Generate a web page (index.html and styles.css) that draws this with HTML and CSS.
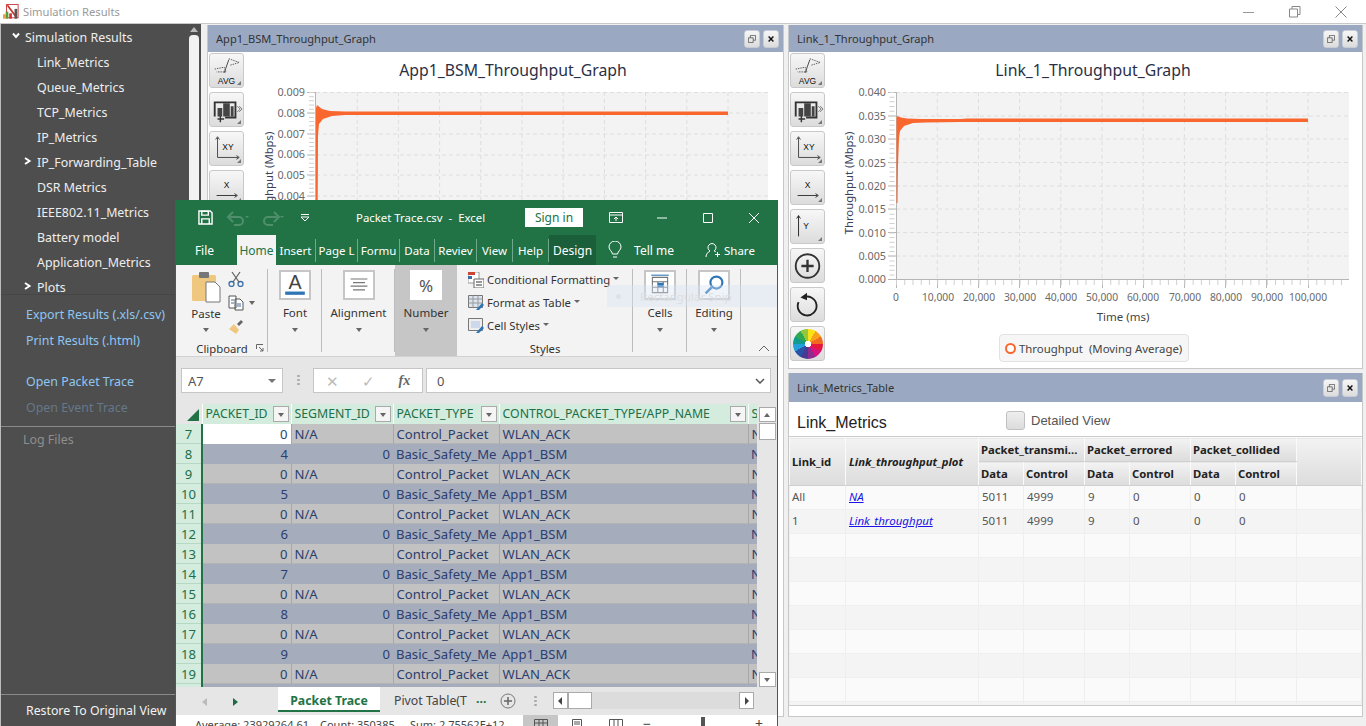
FILE: index.html
```html
<!DOCTYPE html>
<html lang="en">
<head>
<meta charset="utf-8">
<title>Simulation Results</title>
<link rel="stylesheet" href="styles.css">
</head>
<body>
<div class="app">
  <header class="titlebar">
    <svg class="app-icon" viewBox="0 0 18 17"><rect x="4" y="0" width="13" height="15" fill="#fff" stroke="#c33"/><path d="M5 1l9 12" stroke="#c33" stroke-width="2"/><rect x="0" y="11" width="3" height="5" fill="#e8a33a"/><rect x="3" y="8" width="3" height="8" fill="#5a9c3c"/><rect x="7" y="10" width="3" height="6" fill="#c33"/><rect x="13" y="5" width="3" height="11" fill="#555"/></svg>
    <span class="app-title">Simulation Results</span>
    <div class="winctl">
      <svg viewBox="0 0 12 12"><path d="M0 6.500h11" stroke="#999"/></svg>
      <svg viewBox="0 0 12 12"><path d="M.5 3h8v8h-8zM3 3V.500h8v8H8.500" fill="none" stroke="#888"/></svg>
      <svg viewBox="0 0 12 12"><path d="M.5.500l11 11M11.500.500l-11 11" stroke="#888"/></svg>
    </div>
  </header>
  <div class="main">
    <aside class="sidebar">
      <div class="side-top">
        <ul class="tree">
          <li class="root"><svg class="chev" viewBox="0 0 8 8"><path d="M1 1.500l3 3.500 3-3.500" fill="none" stroke="#fff" stroke-width="2"/></svg>Simulation Results</li>
          <li>Link_Metrics</li>
          <li>Queue_Metrics</li>
          <li>TCP_Metrics</li>
          <li>IP_Metrics</li>
          <li><svg class="chev-r" viewBox="0 0 8 8"><path d="M1 1l4.500 3L1 7" fill="none" stroke="#fff" stroke-width="2"/></svg>IP_Forwarding_Table</li>
          <li>DSR Metrics</li>
          <li>IEEE802.11_Metrics</li>
          <li>Battery model</li>
          <li>Application_Metrics</li>
          <li><svg class="chev-r" viewBox="0 0 8 8"><path d="M1 1l4.500 3L1 7" fill="none" stroke="#fff" stroke-width="2"/></svg>Plots</li>
        </ul>
        <div class="side-scroll"><span class="side-up"></span><span class="side-thumb"></span></div>
      </div>
      <div class="links">
        <a>Export Results (.xls/.csv)</a>
        <a>Print Results (.html)</a>
        <a class="gap">Open Packet Trace</a>
        <a class="off">Open Event Trace</a>
      </div>
      <div class="logs">Log Files</div>
      <div class="restore">Restore To Original View</div>
    </aside>
    <div class="desktop">

      <section class="win win-app">
        <div class="win-head"><span>App1_BSM_Throughput_Graph</span><div class="win-btns"><button class="wbtn"><svg viewBox="0 0 10 10"><path d="M.5 3.500h6v6h-6zM3 3.500V.500h6.500v6H7" fill="none" stroke="#555"/></svg></button><button class="wbtn"><svg viewBox="0 0 10 10"><path d="M2 2l6 6M8 2L2 8" stroke="#111" stroke-width="1.800"/></svg></button></div></div>
        <div class="win-body">
          <div class="tools">
            <div class="tool tri"><svg viewBox="0 0 35 35"><path d="M5 16l10-2 2 5-10 0M20 5l11 4-10 3" fill="none" stroke="#555" stroke-dasharray="1.500 1"/><path d="M15 20l5-14" stroke="#444"/><text x="17.500" y="32" class="ic-t">AVG</text></svg></div>
            <div class="tool tri"><svg viewBox="0 0 35 35"><path d="M5 25V10h22v16H16" fill="none" stroke="#333" stroke-width="2"/><path d="M8 16h5v9H8zM14 11h7v14h-7zM22 14h3v11h-3z" fill="#444"/><path d="M11 24v7M8 27.500h7" stroke="#333" stroke-width="1.500"/><path d="M29 14l3 3-3 3M31 14l3 3-3 3" fill="none" stroke="#777"/></svg></div>
            <div class="tool tri"><svg viewBox="0 0 35 35"><path d="M8 27V6M8 27h22M6 8l2-3 2 3M28 25l3 2-3 2" fill="none" stroke="#444"/><text x="19" y="19" class="ic-t">XY</text></svg></div>
            <div class="tool tri"><svg viewBox="0 0 35 35"><path d="M7 26h21M26 24l3 2-3 2" fill="none" stroke="#333"/><text x="17.500" y="18" class="ic-t">X</text></svg></div>
          </div>
          <svg class="chart" viewBox="246 52 536 320">
            <rect x="316" y="92" width="452" height="187" fill="#f3f3f3"/>
            <path class="grid" d="M357.200 92V279M398.400 92V279M439.600 92V279M480.800 92V279M522 92V279M563.200 92V279M604.400 92V279M645.600 92V279M686.800 92V279M728 92V279M316 92.500H768M316 113H768M316 134H768M316 155H768M316 175H768M316 196H768M316 217H768M316 238H768M316 258H768"/>
            <path class="axis" d="M315.500 92V280M307 92.500h8M307 113h8M307 134h8M307 155h8M307 175h8M307 196h8"/>
            <line class="minor" x1="311.500" y1="92" x2="311.500" y2="279" stroke-dasharray="1 3.160"/>
            <text class="tick" x="305" y="96">0.009</text><text class="tick" x="305" y="117">0.008</text><text class="tick" x="305" y="138">0.007</text><text class="tick" x="305" y="158">0.006</text><text class="tick" x="305" y="179">0.005</text><text class="tick" x="305" y="200">0.004</text><text class="tick" x="305" y="221">0.003</text>
            <text class="ylabel" transform="translate(273 183) rotate(-90)">Throughput (Mbps)</text>
            <text class="ctitle" x="513" y="76">App1_BSM_Throughput_Graph</text>
            <path class="trace" d="M316 260V108L317 105L322 109L330 111L345 111.500L360 111.500L728 111.500V115H360L345 115L332 116L323 119L319 124L318 135L317.500 260Z"/>
          </svg>
        </div>
      </section>

      <section class="win win-link">
        <div class="win-head"><span>Link_1_Throughput_Graph</span><div class="win-btns"><button class="wbtn"><svg viewBox="0 0 10 10"><path d="M.5 3.500h6v6h-6zM3 3.500V.500h6.500v6H7" fill="none" stroke="#555"/></svg></button><button class="wbtn"><svg viewBox="0 0 10 10"><path d="M2 2l6 6M8 2L2 8" stroke="#111" stroke-width="1.800"/></svg></button></div></div>
        <div class="win-body">
          <div class="tools">
            <div class="tool tri"><svg viewBox="0 0 35 35"><path d="M5 16l10-2 2 5-10 0M20 5l11 4-10 3" fill="none" stroke="#555" stroke-dasharray="1.500 1"/><path d="M15 20l5-14" stroke="#444"/><text x="17.500" y="32" class="ic-t">AVG</text></svg></div>
            <div class="tool tri"><svg viewBox="0 0 35 35"><path d="M5 25V10h22v16H16" fill="none" stroke="#333" stroke-width="2"/><path d="M8 16h5v9H8zM14 11h7v14h-7zM22 14h3v11h-3z" fill="#444"/><path d="M11 24v7M8 27.500h7" stroke="#333" stroke-width="1.500"/><path d="M29 14l3 3-3 3M31 14l3 3-3 3" fill="none" stroke="#777"/></svg></div>
            <div class="tool tri"><svg viewBox="0 0 35 35"><path d="M8 27V6M8 27h22M6 8l2-3 2 3M28 25l3 2-3 2" fill="none" stroke="#444"/><text x="19" y="19" class="ic-t">XY</text></svg></div>
            <div class="tool tri"><svg viewBox="0 0 35 35"><path d="M7 26h21M26 24l3 2-3 2" fill="none" stroke="#333"/><text x="17.500" y="18" class="ic-t">X</text></svg></div>
            <div class="tool tri"><svg viewBox="0 0 35 35"><path d="M8 28V6M6 9l2-3 2 3" fill="none" stroke="#222"/><text x="16" y="20" class="ic-t">Y</text></svg></div>
            <div class="tool"><svg viewBox="0 0 35 35"><circle cx="17.500" cy="18" r="12.500" fill="none" stroke="#333" stroke-width="2"/><path d="M11 18h13M17.500 11.500v13" stroke="#333" stroke-width="2.500"/></svg></div>
            <div class="tool"><svg viewBox="0 0 35 35"><path d="M13 10a10 10 0 1 1-5 5" fill="none" stroke="#222" stroke-width="2"/><path d="M10 10l7-5v8z" fill="#222"/></svg></div>
            <div class="tool"><span class="wheel"></span></div>
          </div>
          <svg class="chart" viewBox="826 52 535 316">
            <rect x="895" y="92" width="453" height="187" fill="#f3f3f3"/>
            <path class="grid" d="M936.200 92V279M977.400 92V279M1018.600 92V279M1059.800 92V279M1101 92V279M1142.200 92V279M1183.400 92V279M1224.600 92V279M1265.800 92V279M1307 92V279M895 92.500H1348M895 116H1348M895 139H1348M895 162.500H1348M895 186H1348M895 209H1348M895 232.500H1348M895 256H1348"/>
            <path class="axis" d="M895.500 92V288M887 92.500h8M887 116h8M887 139h8M887 162.500h8M887 186h8M887 209h8M887 232.500h8M887 256h8M887 279.500h461M936.500 279v9M977.500 279v9M1018.500 279v9M1059.500 279v9M1101.500 279v9M1142.500 279v9M1183.500 279v9M1224.500 279v9M1265.500 279v9M1307.500 279v9"/>
            <line class="minor" x1="891" y1="92" x2="891" y2="279" stroke-dasharray="1 3.680"/>
            <line class="minor" x1="895" y1="282.500" x2="1344" y2="282.500" stroke-dasharray="1 7.240"/>
            <text class="tick" x="885" y="96">0.040</text><text class="tick" x="885" y="120">0.035</text><text class="tick" x="885" y="143">0.030</text><text class="tick" x="885" y="167">0.025</text><text class="tick" x="885" y="190">0.020</text><text class="tick" x="885" y="213">0.015</text><text class="tick" x="885" y="237">0.010</text><text class="tick" x="885" y="260">0.005</text><text class="tick" x="885" y="283">0.000</text>
            <g class="xt"><text x="895" y="301">0</text><text x="937" y="301">10,000</text><text x="978" y="301">20,000</text><text x="1019" y="301">30,000</text><text x="1060" y="301">40,000</text><text x="1101" y="301">50,000</text><text x="1142" y="301">60,000</text><text x="1184" y="301">70,000</text><text x="1225" y="301">80,000</text><text x="1266" y="301">90,000</text><text x="1307" y="301">100,000</text></g>
            <text class="ylabel" transform="translate(852 183) rotate(-90)">Throughput (Mbps)</text>
            <text class="xlabel" x="1122" y="321">Time (ms)</text>
            <text class="ctitle" x="1092" y="76">Link_1_Throughput_Graph</text>
            <path class="trace" d="M895.500 203V118L896 116L900 117.500L906 118.500L920 119L960 119L966 118.500L1307 118.500V122H990L960 122L925 122.500L912 123L903 126L899 131L898 138L897 165L896.500 203Z"/>
          </svg>
          <div class="legend"><i></i>Throughput&nbsp; (Moving Average)</div>
        </div>
      </section>

      <section class="win win-table">
        <div class="win-head"><span>Link_Metrics_Table</span><div class="win-btns"><button class="wbtn"><svg viewBox="0 0 10 10"><path d="M.5 3.500h6v6h-6zM3 3.500V.500h6.500v6H7" fill="none" stroke="#555"/></svg></button><button class="wbtn"><svg viewBox="0 0 10 10"><path d="M2 2l6 6M8 2L2 8" stroke="#111" stroke-width="1.800"/></svg></button></div></div>
        <div class="metrics-top"><span class="metrics-title">Link_Metrics</span><span class="check"></span><span class="check-label">Detailed View</span></div>
        <div class="metrics-wrap">
          <table class="metrics">
            <colgroup><col class="m1"><col class="m2"><col class="m3"><col class="m4"><col class="m3"><col class="m4"><col class="m3"><col class="m4"><col></colgroup>
            <thead>
              <tr><th rowspan="2">Link_id</th><th rowspan="2" class="ital">Link_throughput_plot</th><th colspan="2">Packet_transmi...</th><th colspan="2">Packet_errored</th><th colspan="2">Packet_collided</th><th rowspan="2"></th></tr>
              <tr><th>Data</th><th>Control</th><th>Data</th><th>Control</th><th>Data</th><th>Control</th></tr>
            </thead>
            <tbody>
              <tr><td>All</td><td><a>NA</a></td><td>5011</td><td>4999</td><td>9</td><td>0</td><td>0</td><td>0</td><td></td></tr>
              <tr><td>1</td><td><a>Link_throughput</a></td><td>5011</td><td>4999</td><td>9</td><td>0</td><td>0</td><td>0</td><td></td></tr>
              <tr><td></td><td></td><td></td><td></td><td></td><td></td><td></td><td></td><td></td></tr>
              <tr><td></td><td></td><td></td><td></td><td></td><td></td><td></td><td></td><td></td></tr>
              <tr><td></td><td></td><td></td><td></td><td></td><td></td><td></td><td></td><td></td></tr>
              <tr><td></td><td></td><td></td><td></td><td></td><td></td><td></td><td></td><td></td></tr>
              <tr><td></td><td></td><td></td><td></td><td></td><td></td><td></td><td></td><td></td></tr>
              <tr><td></td><td></td><td></td><td></td><td></td><td></td><td></td><td></td><td></td></tr>
              <tr><td></td><td></td><td></td><td></td><td></td><td></td><td></td><td></td><td></td></tr>
              <tr><td></td><td></td><td></td><td></td><td></td><td></td><td></td><td></td><td></td></tr>
            </tbody>
          </table>
        </div>
      </section>
    </div>
  </div>

  <section class="excel">
    <div class="x-top">
      <svg class="x-save" viewBox="0 0 16 16"><path d="M1 1h12l2 2v12H1z" fill="none" stroke="#fff" stroke-width="1.500"/><path d="M4 1.500h7v4H4zM4 15V9.500h8V15" fill="none" stroke="#fff" stroke-width="1.500"/></svg>
      <svg class="x-undo" viewBox="0 0 24 16"><path d="M4 7h9a4 4 0 0 1 0 8H8M7 2L2 7l5 5" fill="none" stroke="#4f8f6c" stroke-width="2"/><path d="M19 6h4l-2 2z" fill="#4f8f6c"/></svg>
      <svg class="x-redo" viewBox="0 0 24 16"><path d="M16 7H7a4 4 0 0 0 0 8h5M13 2l5 5-5 5" fill="none" stroke="#4f8f6c" stroke-width="2"/><path d="M19 6h4l-2 2z" fill="#4f8f6c"/></svg>
      <svg class="x-cust" viewBox="0 0 10 10"><path d="M1 1.500h8M1 4l4 4 4-4z" fill="none" stroke="#fff"/></svg>
      <span class="x-title">Packet Trace.csv&nbsp; -&nbsp; Excel</span>
      <span class="x-sign">Sign in</span>
      <svg class="x-disp" viewBox="0 0 14 12"><path d="M.5.500h13v10H.500zM.5 3h13M7 9V5M5 7l2-2 2 2" fill="none" stroke="#fff"/></svg>
      <svg class="x-min" viewBox="0 0 10 10"><path d="M0 5h10" stroke="#fff"/></svg>
      <svg class="x-max" viewBox="0 0 10 10"><path d="M.5.500h9v9h-9z" fill="none" stroke="#fff"/></svg>
      <svg class="x-close" viewBox="0 0 10 10"><path d="M0 0l10 10M10 0L0 10" stroke="#fff"/></svg>
    </div>
    <nav class="x-tabs">
      <span class="t-file">File</span><span class="t-home">Home</span><span class="t-ins">Insert</span><span class="t-page">Page L</span><span class="t-page">Formu</span><span class="t-data">Data</span><span class="t-page">Reviev</span><span class="t-view">View</span><span class="t-view">Help</span><span class="t-design">Design</span>
      <svg class="x-bulb" viewBox="0 0 14 18"><path d="M4.500 13C4 10 1 9 1 6a6 6 0 0 1 12 0c0 3-3 4-3.500 7zM5 16h4" fill="none" stroke="#fff"/></svg>
      <span class="t-tell">Tell me</span>
      <svg class="x-person" viewBox="0 0 16 16"><path d="M1 15c0-3 2-5 4-6a4 4 0 1 1 4 0c1 .3 2 1 2 1M12.500 10v5M10 12.500h5" fill="none" stroke="#fff"/></svg>
      <span class="t-share">Share</span>
    </nav>
    <div class="ribbon">
      <div class="rg rg-clip">
        <div class="clip-row">
          <div class="paste">
            <svg viewBox="0 0 30 32"><rect x="1" y="4" width="24" height="26" rx="1.500" fill="#f0c77e"/><rect x="8" y="1" width="10" height="6" rx="1" fill="#777"/><path d="M15 11h9l5 5v15H15z" fill="#fff" stroke="#777"/></svg>
            <span class="rl">Paste</span><i class="caret"></i>
          </div>
          <div class="clip-small">
            <svg viewBox="0 0 16 16"><circle cx="3.500" cy="13" r="2.500" fill="none" stroke="#3a6ea5" stroke-width="1.300"/><circle cx="12.500" cy="13" r="2.500" fill="none" stroke="#3a6ea5" stroke-width="1.300"/><path d="M5 11L12 1M11 11L4 1" stroke="#666" stroke-width="1.300"/></svg>
            <span class="copy-line"><svg viewBox="0 0 16 16"><path d="M1 1h7l0 12H1zM7 4h5l3 3v8H7z" fill="#fff" stroke="#555"/><path d="M3 5h3M3 8h3M9 9h4M9 11h4" stroke="#3a6ea5"/></svg><i class="caret"></i></span>
            <svg viewBox="0 0 16 16"><path d="M1 10l5-5 5 6-3 4z" fill="#f0c77e"/><path d="M9 5l4-4 2 2-4 4z" fill="#666"/></svg>
          </div>
        </div>
        <span class="rg-name">Clipboard</span>
        <svg class="launch" viewBox="0 0 8 8"><path d="M.5 5V.500H7M3 3l4 4M4 7h3V4" fill="none" stroke="#666"/></svg>
      </div>
      <div class="rg rg-font">
        <span class="bigbtn"><svg viewBox="0 0 20 22"><text x="10" y="15" class="ic-a">A</text><rect x="1" y="17" width="18" height="3" fill="#2e75b6"/></svg></span>
        <span class="rl">Font</span><i class="caret"></i>
      </div>
      <div class="rg rg-align">
        <span class="bigbtn"><svg viewBox="0 0 20 20"><path d="M3 5h14M5 8h10M3 11h14M5 14h10" stroke="#777"/></svg></span>
        <span class="rl">Alignment</span><i class="caret"></i>
      </div>
      <div class="rg rg-num">
        <span class="bigbtn plain">%</span>
        <span class="rl">Number</span><i class="caret"></i>
      </div>
      <div class="rg rg-styles">
        <div class="style-list">
          <div><svg viewBox="0 0 16 16"><path d="M0 0h11v11H0z" fill="#fff" stroke="#999"/><path d="M0 0h7v3H0z" fill="#c43"/><path d="M0 4h4v3H0z" fill="#3a6ea5"/><path d="M6 7h10v9H6z" fill="#fff" stroke="#666"/><path d="M8 10h6M8 13h6" stroke="#333"/></svg>Conditional Formatting<i class="caret sm"></i></div>
          <div><svg viewBox="0 0 16 16"><path d="M.5.500h14v12H.500z" fill="#dbe5f1" stroke="#777"/><path d="M5 .500v12M10 .500v12M.5 4h14M.5 8h14" stroke="#999"/><path d="M8 15l6-7 2 2-5 5z" fill="#2e75b6"/></svg>Format as Table<i class="caret sm"></i></div>
          <div><svg viewBox="0 0 16 16"><path d="M.5.500h14v12H.500z" fill="#eee" stroke="#777"/><path d="M3 3h9v7H3z" fill="#cdd9ea"/><path d="M8 15l6-7 2 2-5 5z" fill="#2e75b6"/></svg>Cell Styles<i class="caret sm"></i></div>
        </div>
        <span class="rg-name">Styles</span>
      </div>
      <div class="rg rg-cells">
        <span class="bigbtn"><svg viewBox="0 0 20 22"><path d="M3 4h14v14H3zM3 8h14M3 13h14M8 8v10M13 8v10" fill="#fff" stroke="#777"/><path d="M2 2h16" stroke="#2e75b6"/><rect x="8" y="9" width="5" height="4" fill="#2e75b6"/></svg></span>
        <span class="rl">Cells</span><i class="caret"></i>
      </div>
      <div class="rg rg-edit">
        <span class="bigbtn"><svg viewBox="0 0 20 20"><circle cx="12" cy="8" r="5" fill="none" stroke="#2e75b6" stroke-width="1.800"/><path d="M8 12l-5 5" stroke="#2e75b6" stroke-width="2.200"/></svg></span>
        <span class="rl">Editing</span><i class="caret"></i>
      </div>
      <svg class="collapse" viewBox="0 0 12 7"><path d="M1 6l5-5 5 5" fill="none" stroke="#666"/></svg>
      <div class="snip"><i></i><span>Rectangular Snip</span></div>
    </div>
    <div class="fbar">
      <div class="namebox">A7<i class="caret dark"></i></div>
      <div class="fdots"></div>
      <div class="fxbox"><span>✕</span><span>✓</span><em>fx</em></div>
      <div class="fval">0<svg viewBox="0 0 10 6"><path d="M1 1l4 4 4-4" fill="none" stroke="#555" stroke-width="1.500"/></svg></div>
    </div>
    <div class="sheet">
      <div class="grid-wrap">
        <table class="cells">
          <colgroup><col class="c0"><col class="c1"><col class="c2"><col class="c3"><col class="c4"><col class="c5"></colgroup>
          <thead><tr><th class="corner"><i></i></th><th>PACKET_ID<i class="filter"></i></th><th>SEGMENT_ID<i class="filter"></i></th><th>PACKET_TYPE<i class="filter"></i></th><th>CONTROL_PACKET_TYPE/APP_NAME<i class="filter"></i></th><th>S</th></tr></thead>
          <tbody>
            <tr class="g"><th>7</th><td class="n sel">0</td><td>N/A</td><td>Control_Packet</td><td>WLAN_ACK</td><td>N</td></tr>
            <tr class="b"><th>8</th><td class="n">4</td><td class="n">0</td><td>Basic_Safety_Me</td><td>App1_BSM</td><td>N</td></tr>
            <tr class="g"><th>9</th><td class="n">0</td><td>N/A</td><td>Control_Packet</td><td>WLAN_ACK</td><td>N</td></tr>
            <tr class="b"><th>10</th><td class="n">5</td><td class="n">0</td><td>Basic_Safety_Me</td><td>App1_BSM</td><td>N</td></tr>
            <tr class="g"><th>11</th><td class="n">0</td><td>N/A</td><td>Control_Packet</td><td>WLAN_ACK</td><td>N</td></tr>
            <tr class="b"><th>12</th><td class="n">6</td><td class="n">0</td><td>Basic_Safety_Me</td><td>App1_BSM</td><td>N</td></tr>
            <tr class="g"><th>13</th><td class="n">0</td><td>N/A</td><td>Control_Packet</td><td>WLAN_ACK</td><td>N</td></tr>
            <tr class="b"><th>14</th><td class="n">7</td><td class="n">0</td><td>Basic_Safety_Me</td><td>App1_BSM</td><td>N</td></tr>
            <tr class="g"><th>15</th><td class="n">0</td><td>N/A</td><td>Control_Packet</td><td>WLAN_ACK</td><td>N</td></tr>
            <tr class="b"><th>16</th><td class="n">8</td><td class="n">0</td><td>Basic_Safety_Me</td><td>App1_BSM</td><td>N</td></tr>
            <tr class="g"><th>17</th><td class="n">0</td><td>N/A</td><td>Control_Packet</td><td>WLAN_ACK</td><td>N</td></tr>
            <tr class="b"><th>18</th><td class="n">9</td><td class="n">0</td><td>Basic_Safety_Me</td><td>App1_BSM</td><td>N</td></tr>
            <tr class="g"><th>19</th><td class="n">0</td><td>N/A</td><td>Control_Packet</td><td>WLAN_ACK</td><td>N</td></tr>
            <tr class="b"><th></th><td></td><td></td><td></td><td></td><td></td></tr>
          </tbody>
        </table>
      </div>
      <div class="vscroll"><span class="vbtn"><i class="up"></i></span><span class="vthumb"></span><span class="vspace"></span><span class="vbtn"><i></i></span></div>
    </div>
    <div class="x-sheets">
      <i class="nav-l"></i><i class="nav-r"></i>
      <span class="st-active">Packet Trace</span>
      <span class="st-other">Pivot Table(T</span>
      <span class="st-more">...</span>
      <svg class="st-plus" viewBox="0 0 16 16"><circle cx="8" cy="8" r="7" fill="none" stroke="#777"/><path d="M4 8h8M8 4v8" stroke="#666" stroke-width="1.500"/></svg>
      <span class="st-dots"></span>
      <div class="hscroll"><span class="hbtn"><i class="hl"></i></span><span class="hthumb"></span><span class="hspace"></span><span class="hbtn"><i class="hr"></i></span></div>
    </div>
    <div class="x-status">
      <span class="s1">Average: 23929264.61</span><span class="s2">Count: 350385</span><span class="s3">Sum: 2.75562E+12</span>
      <span class="s-view"><svg viewBox="0 0 14 12"><path d="M.5.500h13v11H.500zM.5 4h13M.5 8h13M5 .500v11M9 .500v11" fill="none" stroke="#555"/></svg></span>
      <svg class="s-ic" viewBox="0 0 14 12"><path d="M2.500.500h9v11h-9zM4 3h6M4 5h6" fill="none" stroke="#555"/></svg>
      <svg class="s-ic" viewBox="0 0 14 12"><path d="M.5.500h13v11H.500zM5 .500v11M9 .500v11" fill="none" stroke="#555"/></svg>
      <span class="s-zoom"><span>−</span><i class="s-thumb"></i><span>+</span></span>
    </div>
  </section>
</div>
</body>
</html>
```
FILE: styles.css
```css
*{box-sizing:border-box}
html,body{margin:0;height:100%;overflow:hidden}
body{font-family:"Noto Sans","Open Sans",sans-serif;background:#f0f0f0;color:#333}
.app{position:relative;width:1366px;height:726px;overflow:hidden;display:flex;flex-direction:column}
svg{display:block}
i{display:block;font-style:normal}

/* title bar */
.titlebar{height:24px;flex:none;background:#fff;border-bottom:1px solid #c8c8c8;display:flex;align-items:center;padding-left:3px}
.app-icon{width:16px;height:16px;margin-right:4px}
.app-title{font-size:11.200px;color:#9a9a9a}
.winctl{margin-left:auto;display:flex;gap:34px;padding-right:19px}
.winctl svg{width:12px;height:12px}

/* sidebar */
.main{flex:1;display:flex;min-height:0}
.sidebar{width:201px;flex:none;background:#4e4e4e;border-left:1px solid #bbb;display:flex;flex-direction:column;color:#eee;font-size:12.400px}
.side-top{height:271px;display:flex;flex:none;border-bottom:1px solid #464646}
.tree{list-style:none;margin:0;padding:1px 0 0;flex:1}
.tree li{height:25px;line-height:25px;padding-left:36px;position:relative;white-space:nowrap}
.tree li.root{padding-left:24px}
.chev{position:absolute;left:11px;top:7px;width:8px;height:8px}
.chev-r{position:absolute;left:23px;top:7px;width:8px;height:8px}
.side-scroll{width:12px;margin-right:1px;display:flex;flex-direction:column;align-items:center;padding-top:3px}
.side-up{width:0;height:0;border:4px solid transparent;border-bottom:5px solid #bbb;border-top:0}
.side-thumb{width:10px;flex:1;margin-top:3px;background:#f2f2f2;border-radius:4px 4px 0 0}
.links{height:132px;flex:none;padding-top:7px;border-bottom:1px solid #8a8a8a;display:flex;flex-direction:column}
.links a{height:26px;line-height:26px;padding-left:25px;color:#8fc6f2;white-space:nowrap}
.links a.gap{margin-top:15px}
.links a.off{color:#64788a}
.logs{flex:1;padding:3px 0 0 22px;line-height:20px;color:#8e8e8e;border-bottom:1px solid #8a8a8a}
.restore{height:31px;flex:none;line-height:31px;padding-left:25px;color:#f2f2f2;font-size:12.300px}

/* windows */
.desktop{flex:1;background:#f0f0f0}
.win{position:absolute;background:#fff;border:1px solid #c8c8c8;border-top:0;overflow:hidden}
.win-app{left:207px;top:25px;width:577px;height:692px}
.win-link{left:788px;top:25px;width:575px;height:344px}
.win-table{left:788px;top:373px;width:575px;height:344px}
.win-head{height:27px;background:#9aa9c1;display:flex;align-items:center;padding:0 4px 0 8px;font-size:11.100px;color:#333}
.win-head>span{margin-top:-1px}
.win-table .win-head{height:29px}
.win-btns{margin-left:auto;display:flex;gap:3px}
.wbtn{width:16px;height:18px;padding:3px;border:1px solid #c8ccd4;border-radius:3px;background:linear-gradient(#f6f6f6,#dcdcdc)}
.win-body{position:relative;display:flex;padding-left:1px}
.tools{width:37px;flex:none;display:flex;flex-direction:column;gap:4px;padding-top:1px}
.tool{width:35px;height:35px;border:1px solid #c9c9c9;border-radius:3px;background:linear-gradient(#f7f7f7,#dcdcdc);position:relative;display:flex;align-items:center;justify-content:center;overflow:hidden}
.tool svg{width:33px;height:33px;flex:none}
.tool.tri::after{content:"";position:absolute;right:2px;bottom:2px;border:2px solid transparent;border-right-color:#777;border-bottom-color:#777}
.ic-t{font:400 9px "Liberation Sans",sans-serif;fill:#111;text-anchor:middle}
.wheel{width:30px;height:30px;border-radius:50%;background:radial-gradient(circle,#fff 0 3px,transparent 3.500px),conic-gradient(#fbe216 0 30deg,#f7a01c 30deg 60deg,#ef6a1f 60deg 90deg,#e5173f 90deg 120deg,#d8127e 120deg 150deg,#8e2b8e 150deg 180deg,#463a92 180deg 210deg,#2a52a5 210deg 240deg,#22a0dc 240deg 270deg,#0f9b8e 270deg 300deg,#2fa84f 300deg 330deg,#93c83e 330deg 360deg)}
.chart{width:535px;height:316px;flex:none;margin-left:0}
.win-app .chart{width:536px;height:320px}
.grid{stroke:#dedede;stroke-dasharray:4 3;fill:none}
.axis{stroke:#b5b5b5;fill:none}
.minor{stroke:#d0d0d0;stroke-width:5px}
.tick{font-size:10.800px;fill:#6a6a6a;text-anchor:end}
.xt text{font-size:10.300px;fill:#6a6a6a;text-anchor:middle}
.ylabel{font-size:11.300px;fill:#3c3f5a;text-anchor:middle}
.xlabel{font-size:11.500px;fill:#444;text-anchor:middle}
.ctitle{font-size:15.800px;fill:#2b2f45;text-anchor:middle}
.trace{fill:#f9672f}
.legend{position:absolute;left:210px;top:282px;width:190px;height:28px;background:#f6f6f6;border:1px solid #e2e2e2;border-radius:4px;display:flex;align-items:center;font-size:11.400px;color:#444;padding-left:5px;white-space:pre}
.legend i{width:11px;height:11px;flex:none;border:2.500px solid #f9672f;border-radius:50%;background:#fff;margin-right:3px}

/* metrics table */
.metrics-top{height:34px;display:flex;align-items:center;background:#fff;font-family:"Liberation Sans",sans-serif}
.metrics-title{font-size:16px;color:#222;margin-left:8px;width:209px;padding-top:7px}
.check{width:19px;height:19px;border:1px solid #c0c0c0;border-radius:3px;background:linear-gradient(#eee,#dcdcdc);margin-top:2px}
.check-label{font-size:13px;color:#555;margin-left:6px;margin-top:2px}
.metrics-wrap{height:270px;overflow:hidden;border-top:1px solid #ccc;border-bottom:1px solid #ccc;margin-left:0}
.metrics{width:573px;border-collapse:collapse;table-layout:fixed;font-size:11.500px}
.m1{width:56px}.m2{width:133px}.m3{width:45px}.m4{width:61px}
.metrics th{height:24px;padding:0 0 0 2px;text-align:left;font-weight:700;font-size:11.300px;color:#222;background:linear-gradient(#f3f3f3,#dcdcdc);border:1px solid #fafafa;border-bottom-color:#d0d0d0;white-space:nowrap;overflow:hidden}
.metrics th.ital{font-style:italic;padding-left:3px}
.metrics td{height:24px;padding:0 0 2px 3px;border:1px solid #efefef;color:#555;white-space:nowrap}
.metrics td:first-child{padding-left:2px}
.metrics tbody tr:nth-child(odd) td{background:#fafafa}
.metrics tbody tr:nth-child(even) td{background:#f4f4f4}
.metrics a{color:#1a12e6;font-style:italic;text-decoration:underline}

/* excel */
.excel{position:absolute;left:175px;top:200px;width:603px;height:526px;background:#e6e6e6;border:solid #217346;border-width:0 1px;display:flex;flex-direction:column;overflow:hidden}
.x-top{height:35px;flex:none;background:#217346;display:flex;align-items:center;position:relative;color:#fff;font-size:11.400px}
.x-save{width:15px;height:15px;margin-left:22px}
.x-undo{width:24px;height:16px;margin-left:13px}
.x-redo{width:24px;height:16px;margin-left:11px}
.x-cust{width:10px;height:10px;margin-left:15px}
.x-title{margin-left:46px;width:169px;white-space:pre}
.x-sign{width:58px;height:19px;background:#fff;color:#217346;text-align:center;line-height:19px;font-size:12px}
.x-disp{width:14px;height:12px;margin-left:26px}
.x-min{width:10px;height:10px;margin-left:34px}
.x-max{width:10px;height:10px;margin-left:36px}
.x-close{width:10px;height:10px;margin-left:36px}
.x-tabs{height:30px;flex:none;background:#217346;display:flex;align-items:center;color:#fff;font-size:11.500px}
.x-tabs>span{height:23px;line-height:23px;text-align:center;border-right:1px solid #6fa88a;white-space:nowrap;overflow:hidden;flex:none}
.x-tabs .t-file{width:61px;border:0;padding-right:4px;font-size:12px}
.x-tabs .t-home{width:39px;height:30px;line-height:31px;background:#f3f3f3;color:#217346;border:0;font-size:12px}
.t-ins{width:40px}.t-page{width:42px}.t-data{width:35px}.t-view{width:36px}
.x-tabs .t-design{width:47px;height:30px;line-height:31px;background:#1b5e3a;border:0;font-size:12px}
.x-bulb{width:14px;height:18px;margin-left:12px}
.x-tabs .t-tell{border:0;margin-left:12px;width:40px;overflow:visible;font-size:12px}
.x-person{width:16px;height:16px;margin-left:31px}
.x-tabs .t-share{border:0;margin-left:3px;overflow:visible}

.ribbon{height:92px;flex:none;background:#f3f3f3;border-bottom:1px solid #d2d2d2;display:flex;position:relative;font-size:11.500px;color:#333}
.rg{position:relative;display:flex;flex-direction:column;align-items:center;padding-top:4px;flex:none}
.rg::after{content:"";position:absolute;right:0;top:4px;height:83px;border-right:1px solid #bdbdbd}
.rl{line-height:16px;margin-top:5px}
.caret{width:0;height:0;border:3.500px solid transparent;border-top:4px solid #666;border-bottom:0;margin-top:7px}
.caret.sm{display:inline-block;border-width:3px;border-top-width:3.500px;border-bottom:0;margin:0 0 2px 3px;vertical-align:middle}
.rg-name{position:absolute;bottom:-1px;line-height:16px;left:0;right:0;text-align:center;font-size:11.300px}
.bigbtn{width:32px;height:30px;border:2px solid #c6c6c6;background:#fff;display:flex;align-items:center;justify-content:center;margin-top:1px}
.bigbtn svg{width:24px;height:24px}
.bigbtn.plain{border-color:#fff;font-size:17px;color:#555}
.ic-a{font:400 18px "Liberation Sans",sans-serif;fill:#444;text-anchor:middle}
.rg-clip{width:92px;align-items:flex-start;padding-left:16px;padding-top:6px}
.clip-row{display:flex;gap:8px}
.paste{width:28px;display:flex;flex-direction:column;align-items:center}
.paste svg{width:30px;height:32px;flex:none}
.paste .rl{margin-top:3px}
.paste .caret{margin-top:6px}
.clip-small{display:flex;flex-direction:column;gap:8px;margin-top:0}
.clip-small svg{width:16px;height:16px}
.copy-line{display:flex;align-items:center;gap:5px}
.copy-line .caret{margin-top:0}
.launch{position:absolute;right:4px;bottom:4px;width:8px;height:8px}
.rg-font{width:54px}.rg-align{width:73px}.rg-num{width:62px;background:#c6c6c6}
.rg-num::after{display:none}
.rg-styles{width:176px;align-items:flex-start;padding:3px 0 0 11px;font-size:11.300px}
.style-list>div{height:23px;display:flex;align-items:center;white-space:nowrap;position:relative}
.style-list svg{width:16px;height:16px;margin-right:3px}
.rg-cells{width:54px}.rg-edit{width:54px}
.collapse{position:absolute;right:7px;bottom:4px;width:12px;height:7px}
.snip{position:absolute;left:431px;top:20px;width:170px;height:22px;background:rgba(214,228,245,.4);display:flex;align-items:center;font-size:11.500px;color:#dedede}
.snip i{width:5px;height:5px;border-radius:50%;background:#dce2ea;margin:0 19px 0 9px}

.fbar{height:47px;flex:none;padding:11px 0 0 5px;display:flex;align-items:flex-start;font-size:13px}
.namebox{width:102px;height:25px;background:#fff;border:1px solid #c6c6c6;display:flex;align-items:center;padding-left:6px;justify-content:space-between;padding-right:6px;color:#555}
.caret.dark{margin:0;border-width:4px;border-top-width:4px;border-top-color:#777}
.fdots{width:30px;height:12px;margin-top:6px;background:radial-gradient(circle,#aaa 1px,transparent 1.500px) center top/3px 4px repeat-y}
.fxbox{width:110px;height:25px;background:#fff;border:1px solid #c6c6c6;display:flex;align-items:center;justify-content:space-around;color:#bbb;font-size:15px}
.fxbox em{font-family:"Liberation Serif",serif;font-weight:700;color:#666;font-size:14px}
.fval{width:345px;height:25px;margin-left:3px;background:#fff;border:1px solid #c6c6c6;display:flex;align-items:center;justify-content:space-between;padding:0 5px 0 10px;color:#555}
.fval svg{width:10px;height:6px}

.sheet{height:283px;flex:none;display:flex;overflow:hidden;font-size:13.100px}
.grid-wrap{width:581px;flex:none;overflow:hidden}
.cells{width:581px;table-layout:fixed;border-collapse:collapse}
.c0{width:26px}.c1{width:89px}.c2{width:102px}.c3{width:106px}.c4{width:249px}.c5{width:9px}
.cells th,.cells td{height:20px;padding:0 3px;overflow:hidden;white-space:nowrap;font-weight:400;text-align:left;color:#2c3e6f}
.cells thead th{position:relative;background:#d3ecdd;color:#1d6f4a;border-right:1px solid #fff;font-size:12.300px;padding:0 3px 2px}
.cells thead th.corner{background:#e6e6e6}
.corner i{position:absolute;right:3px;bottom:3px;border:solid transparent;border-width:0 0 12px 12px;border-bottom-color:#217346}
.filter{position:absolute;right:2px;top:2px;width:16px;height:16px;background:#f5f5f5;border:1px solid #aaa}
.filter::after{content:"";position:absolute;left:4px;top:6px;border:3.500px solid transparent;border-top:4px solid #666;border-bottom:0}
.cells tbody th{background:#d3ecdd;color:#1d6f4a;text-align:center;padding:0;border-right:2px solid #217346;box-shadow:inset 0 -1px #b7d8c5}
.cells tr.g td{background:#c2c2c2;border-right:1px solid #a8a8a8;box-shadow:inset 0 -1px #b4b4b4}
.cells tr.b td{background:#a5adbd}
.cells td.n{text-align:right}
.cells td.sel{background:#fff!important;box-shadow:none!important}
.vscroll{width:17px;margin-left:2px;display:flex;flex-direction:column;gap:1px;flex:none;background:#e6e6e6;padding-top:3px}
.vbtn{height:15px;border:1px solid #aaa;background:#fff;position:relative;flex:none}
.vbtn i{position:absolute;left:4px;top:5px;border:3.500px solid transparent;border-top:4px solid #666;border-bottom:0}
.vbtn i.up{border-top:0;border-bottom:4px solid #666}
.vthumb{height:17px;border:1px solid #aaa;background:#fff;flex:none}
.vspace{flex:1}

.x-sheets{height:28px;flex:none;display:flex;align-items:flex-start;font-size:12.300px;position:relative}
.nav-l{margin:11px 0 0 26px;border:solid transparent;border-width:4px 5px 4px 0;border-right-color:#bbb}
.nav-r{margin:11px 0 0 26px;border:solid transparent;border-width:4px 0 4px 5px;border-left-color:#1b6b45}
.st-active{width:102px;height:25px;margin-left:40px;background:#fff;border-bottom:2px solid #217346;font-weight:700;color:#217346;text-align:center;line-height:27px;font-size:12.300px}
.st-other{margin:0 0 0 14px;line-height:27px;color:#444;width:82px;white-space:nowrap}
.st-more{font-weight:700;color:#217346;line-height:24px;width:20px}
.st-plus{width:16px;height:16px;margin:6px 0 0 4px}
.st-dots{width:3px;height:12px;margin:8px 0 0 18px;background:radial-gradient(circle,#aaa 1px,transparent 1.500px) center top/3px 4px repeat-y}
.hscroll{width:201px;height:17px;margin:5px 0 0 16px;background:#dcdcdc;display:flex}
.hbtn{width:15px;height:17px;background:#fff;border:1px solid #aaa;position:relative;flex:none}
.hthumb{width:24px;background:#fff;border:1px solid #aaa;flex:none}
.hspace{flex:1}
.hl{position:absolute;left:4px;top:4px;border:solid transparent;border-width:4px 4px 4px 0;border-right-color:#444}
.hr{position:absolute;left:5px;top:4px;border:solid transparent;border-width:4px 0 4px 4px;border-left-color:#444}
.x-status{height:40px;flex:none;background:#fff;position:relative;font-size:11px;color:#444;display:flex;align-items:flex-start;line-height:20px}
.s1{margin-left:19px;width:125px;white-space:nowrap}
.s2{width:90px;white-space:nowrap}
.s3{width:113px;white-space:nowrap}
.s-view{width:35px;height:12px;background:#c6c6c6;display:flex;justify-content:center;padding-top:4px}
.s-view svg,.s-ic{width:14px;height:12px;flex:none}
.s-ic{margin:4px 0 0 12px}
.s-ic+.s-ic{margin-left:25px}
.s-zoom{margin-left:20px;width:120px;display:flex;align-items:flex-start;justify-content:space-between;font-size:14px;line-height:18px;position:relative}
.s-thumb{position:absolute;left:58px;top:2px;width:4px;height:12px;background:#555}
```
